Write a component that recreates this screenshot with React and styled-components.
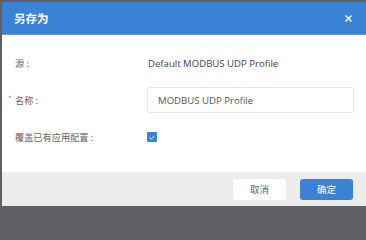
import React, { useState } from 'react';
import styled, { createGlobalStyle } from 'styled-components';

const GlobalStyle = createGlobalStyle`
  html, body {
    margin: 0;
    padding: 0;
    background: #5f6063;
    overflow: hidden;
  }
  body {
    font-family: "Open Sans", "Noto Sans CJK SC", sans-serif;
  }
`;

const StyledBackdrop = styled.div`
  width: 366px;
  height: 208px;
  padding: 2px 0 2px 2px;
  box-sizing: border-box;
  background: #5f6063;
`;

const StyledDialog = styled.div`
  display: flex;
  flex-direction: column;
  width: 364px;
  height: 204px;
  background: #fff;
`;

const StyledHeader = styled.div`
  display: flex;
  align-items: center;
  justify-content: space-between;
  height: 33px;
  padding: 0 11px 0 12px;
  background: #3a82d6;
  border-bottom: 1px solid #5b9ae0;
  box-sizing: border-box;
  flex-shrink: 0;
`;

const StyledTitle = styled.h1`
  margin: 0;
  font-size: 11.5px;
  font-weight: 700;
  color: #fff;
  font-family: "Noto Sans CJK SC", sans-serif;
`;

const StyledClose = styled.button`
  display: flex;
  align-items: center;
  justify-content: center;
  width: 14px;
  height: 14px;
  padding: 0;
  border: none;
  background: transparent;
  cursor: pointer;
`;

const StyledBody = styled.div`
  flex: 1;
  display: flex;
  flex-direction: column;
  gap: 11px;
  padding: 15px 0 0 13px;
`;

const StyledRow = styled.div`
  display: grid;
  grid-template-columns: 132px 207px;
  align-items: center;
  height: 26px;
`;

const StyledLabel = styled.label`
  position: relative;
  font-size: 9.2px;
  color: #666;
  font-family: "Noto Sans CJK SC", sans-serif;

  &::before {
    content: ${({ required }) => (required ? "'*'" : 'none')};
    position: absolute;
    left: -7px;
    top: 0;
    color: #e55a6a;
    font-size: 8px;
  }
`;

const StyledValue = styled.span`
  padding-left: 1px;
  font-size: 9.6px;
  color: #444;
`;

const StyledInput = styled.input`
  width: 100%;
  height: 26px;
  box-sizing: border-box;
  padding: 0 10px;
  border: 1px solid #e6e6e6;
  border-radius: 2px;
  font-family: "Open Sans", sans-serif;
  font-size: 9.6px;
  color: #555;
  outline: none;
`;

const StyledCheckbox = styled.span`
  display: flex;
  align-items: center;
  justify-content: center;
  width: 10px;
  height: 10px;
  border-radius: 1px;
  background: ${({ checked }) => (checked ? '#3a82d6' : '#fff')};
  border: ${({ checked }) => (checked ? 'none' : '1px solid #ccc')};
  cursor: pointer;
`;

const StyledFooter = styled.div`
  display: flex;
  justify-content: flex-end;
  align-items: center;
  gap: 14px;
  height: 34px;
  padding-right: 13px;
  background: #ececec;
  flex-shrink: 0;
`;

const StyledButton = styled.button`
  width: 53px;
  height: 21px;
  border-radius: 3px;
  border: none;
  font-family: "Noto Sans CJK SC", sans-serif;
  font-size: 9.5px;
  color: ${({ primary }) => (primary ? '#fff' : '#666')};
  background: ${({ primary }) => (primary ? '#3a82d6' : '#fff')};
  cursor: pointer;
`;

export default function App() {
  const [name, setName] = useState('MODBUS UDP Profile');
  const [overwrite, setOverwrite] = useState(true);

  return (
    <>
      <GlobalStyle />
      <StyledBackdrop>
        <StyledDialog>
          <StyledHeader>
            <StyledTitle>另存为</StyledTitle>
            <StyledClose aria-label="close">
              <svg width="7" height="7" viewBox="0 0 7 7">
                <path d="M0.5 0.5 L6.5 6.5 M6.5 0.5 L0.5 6.5" stroke="#fff" strokeWidth="1.4" />
              </svg>
            </StyledClose>
          </StyledHeader>
          <StyledBody>
            <StyledRow>
              <StyledLabel>源 :</StyledLabel>
              <StyledValue>Default MODBUS UDP Profile</StyledValue>
            </StyledRow>
            <StyledRow>
              <StyledLabel required>名称 :</StyledLabel>
              <StyledInput value={name} onChange={(e) => setName(e.target.value)} />
            </StyledRow>
            <StyledRow>
              <StyledLabel>覆盖已有应用配置 :</StyledLabel>
              <StyledCheckbox checked={overwrite} onClick={() => setOverwrite(!overwrite)}>
                {overwrite ? (
                  <svg width="6" height="5" viewBox="0 0 6 5">
                    <path d="M0.6 2.5 L2.3 4 L5.4 0.8" fill="none" stroke="#fff" strokeWidth="0.9" />
                  </svg>
                ) : null}
              </StyledCheckbox>
            </StyledRow>
          </StyledBody>
          <StyledFooter>
            <StyledButton>取消</StyledButton>
            <StyledButton primary>确定</StyledButton>
          </StyledFooter>
        </StyledDialog>
      </StyledBackdrop>
    </>
  );
}
